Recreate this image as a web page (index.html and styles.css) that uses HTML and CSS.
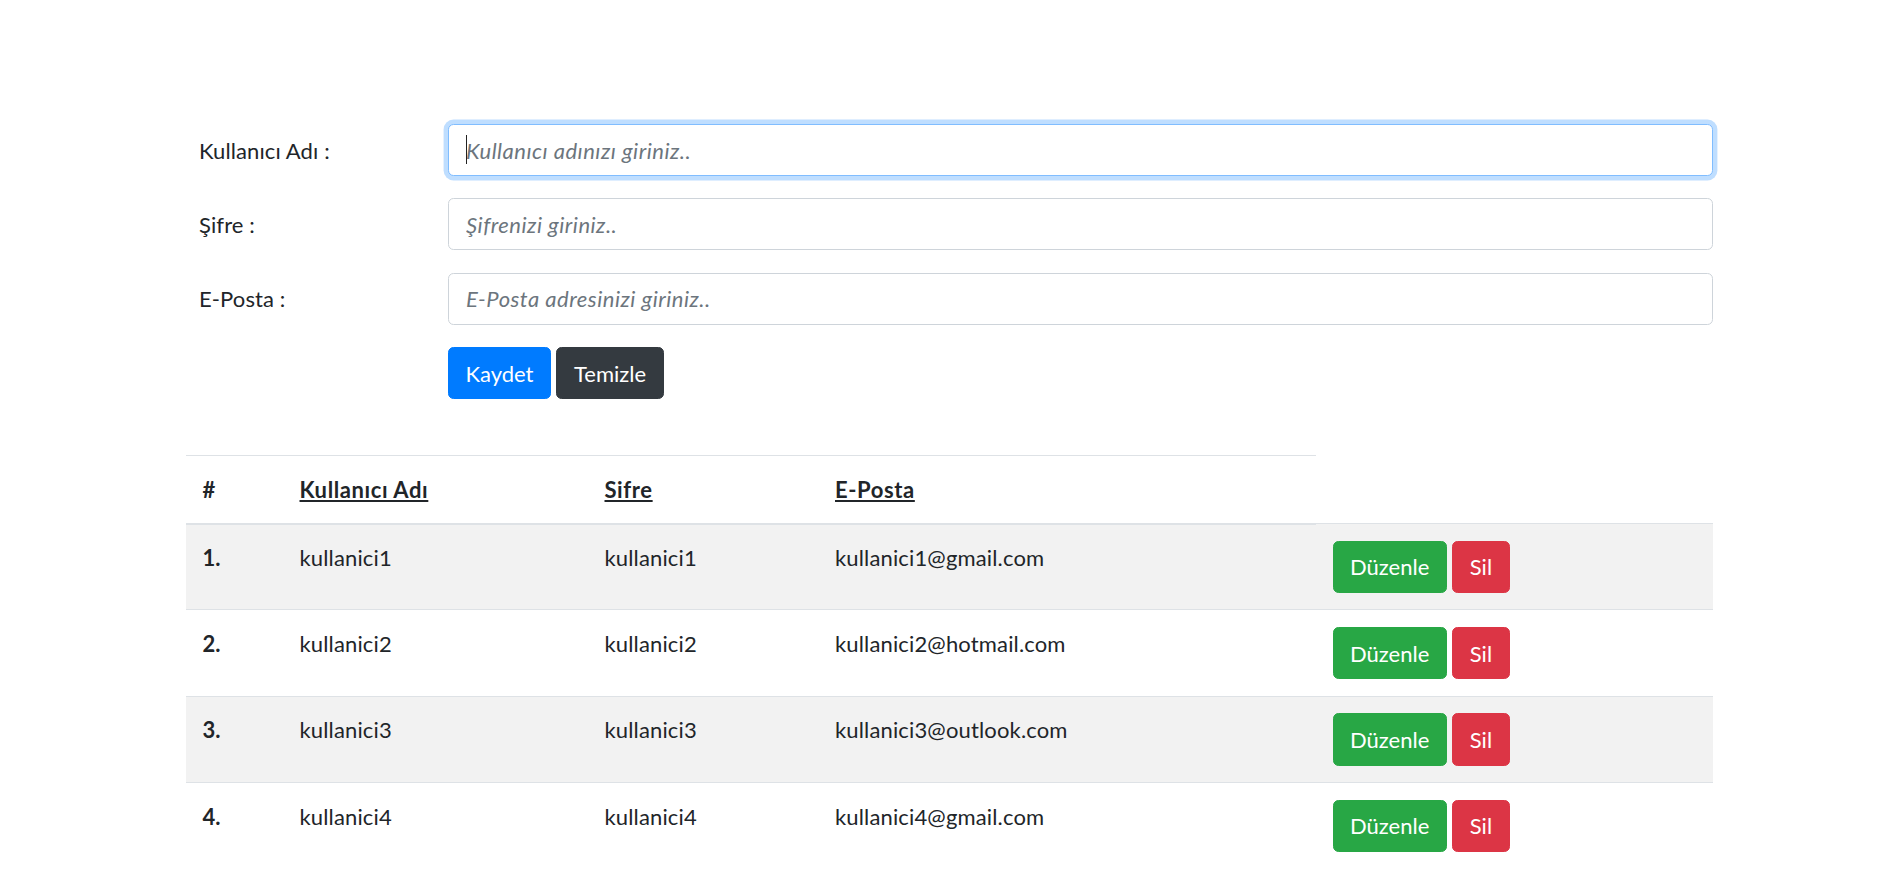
FILE: index.html
```html
<!DOCTYPE html>
<html lang="tr">
<head>
<meta charset="utf-8">
<title>Kullanıcılar</title>
<link rel="stylesheet" href="styles.css">
</head>
<body>
<div class="container">
  <form class="user-form">
    <div class="form-row">
      <label class="form-label">Kullanıcı Adı :</label>
      <div class="field">
        <input class="form-input is-focused" type="text" placeholder="Kullanıcı adınızı giriniz..">
        <span class="caret"></span>
      </div>
    </div>
    <div class="form-row">
      <label class="form-label">Şifre :</label>
      <div class="field">
        <input class="form-input" type="password" placeholder="Şifrenizi giriniz..">
      </div>
    </div>
    <div class="form-row">
      <label class="form-label">E-Posta :</label>
      <div class="field">
        <input class="form-input" type="email" placeholder="E-Posta adresinizi giriniz..">
      </div>
    </div>
    <div class="form-row">
      <span class="form-label"></span>
      <div class="actions">
        <button type="button" class="btn btn-primary">Kaydet</button>
        <button type="button" class="btn btn-dark">Temizle</button>
      </div>
    </div>
  </form>

  <table class="users">
    <colgroup>
      <col class="c-num"><col class="c-name"><col class="c-pass"><col class="c-mail"><col class="c-act">
    </colgroup>
    <thead>
      <tr>
        <th>#</th>
        <th><a href="#">Kullanıcı Adı</a></th>
        <th><a href="#">Sifre</a></th>
        <th><a href="#">E-Posta</a></th>
      </tr>
    </thead>
    <tbody>
      <tr>
        <th>1.</th><td>kullanici1</td><td>kullanici1</td><td>kullanici1@gmail.com</td>
        <td><div class="row-actions"><button class="btn btn-success">Düzenle</button><button class="btn btn-danger">Sil</button></div></td>
      </tr>
      <tr>
        <th>2.</th><td>kullanici2</td><td>kullanici2</td><td>kullanici2@hotmail.com</td>
        <td><div class="row-actions"><button class="btn btn-success">Düzenle</button><button class="btn btn-danger">Sil</button></div></td>
      </tr>
      <tr>
        <th>3.</th><td>kullanici3</td><td>kullanici3</td><td>kullanici3@outlook.com</td>
        <td><div class="row-actions"><button class="btn btn-success">Düzenle</button><button class="btn btn-danger">Sil</button></div></td>
      </tr>
      <tr>
        <th>4.</th><td>kullanici4</td><td>kullanici4</td><td>kullanici4@gmail.com</td>
        <td><div class="row-actions"><button class="btn btn-success">Düzenle</button><button class="btn btn-danger">Sil</button></div></td>
      </tr>
    </tbody>
  </table>
</div>
</body>
</html>
```

FILE: styles.css
```css
* { box-sizing: border-box; }

html, body {
  margin: 0;
  padding: 0;
  background: #fff;
  overflow: hidden;
}

body {
  font-family: "Lato", "Open Sans", "Liberation Sans", sans-serif;
  font-size: 22px;
  line-height: 33px;
  color: #212529;
}

.container {
  width: 1527px;
  margin-left: 186px;
  padding-top: 124px;
}

.user-form {
  display: flex;
  flex-direction: column;
  gap: 22.3px;
}

.form-row {
  display: grid;
  grid-template-columns: 262px 1fr;
  align-items: start;
}

.form-label {
  padding-left: 13px;
  padding-top: 9.5px;
  line-height: 33px;
  letter-spacing: 0.1px;
}

.field {
  position: relative;
}

.form-input {
  display: block;
  width: 100%;
  height: 52px;
  padding: 8.5px 17px;
  font: inherit;
  line-height: 33px;
  color: #495057;
  background: #fff;
  border: 1px solid #ced4da;
  border-radius: 5.5px;
  outline: none;
}

.form-input::placeholder {
  color: #6c757d;
  font-style: italic;
  letter-spacing: 0.5px;
  opacity: 1;
}

.form-input.is-focused {
  border-color: #80bdff;
  box-shadow: 0 0 0 4.4px rgba(0, 123, 255, 0.25);
}

.caret {
  position: absolute;
  left: 18px;
  top: 11px;
  width: 1px;
  height: 29px;
  background: #222;
}

.actions,
.row-actions {
  display: flex;
  gap: 5.5px;
}

.btn {
  font: inherit;
  line-height: 33px;
  height: 52.3px;
  padding: 8.5px 16.5px;
  border: 1px solid transparent;
  border-radius: 5.5px;
  color: #fff;
  cursor: pointer;
  white-space: nowrap;
}

.btn-primary { background: #007bff; border-color: #007bff; }
.btn-dark { background: #343a40; border-color: #343a40; }
.btn-success { background: #28a745; border-color: #28a745; }
.btn-danger { background: #dc3545; border-color: #dc3545; }

.users {
  width: 100%;
  margin-top: 56px;
  border-collapse: collapse;
  table-layout: fixed;
}

.c-num { width: 97px; }
.c-name { width: 305px; }
.c-pass { width: 230.5px; }
.c-mail { width: 497.5px; }
.c-act { width: 397px; }

.users th,
.users td {
  padding: 16.5px;
  text-align: left;
  vertical-align: top;
  border-top: 1px solid #dee2e6;
  line-height: 33px;
}

.users td {
  letter-spacing: 0.15px;
}

.users th { font-weight: 700; }

.users thead th {
  border-bottom: 2px solid #dee2e6;
  padding-top: 17px;
}

.users thead a {
  color: #212529;
  text-decoration: underline;
  letter-spacing: 0.6px;
}

.users tbody tr:nth-child(odd) {
  background: #f2f2f2;
}
```
